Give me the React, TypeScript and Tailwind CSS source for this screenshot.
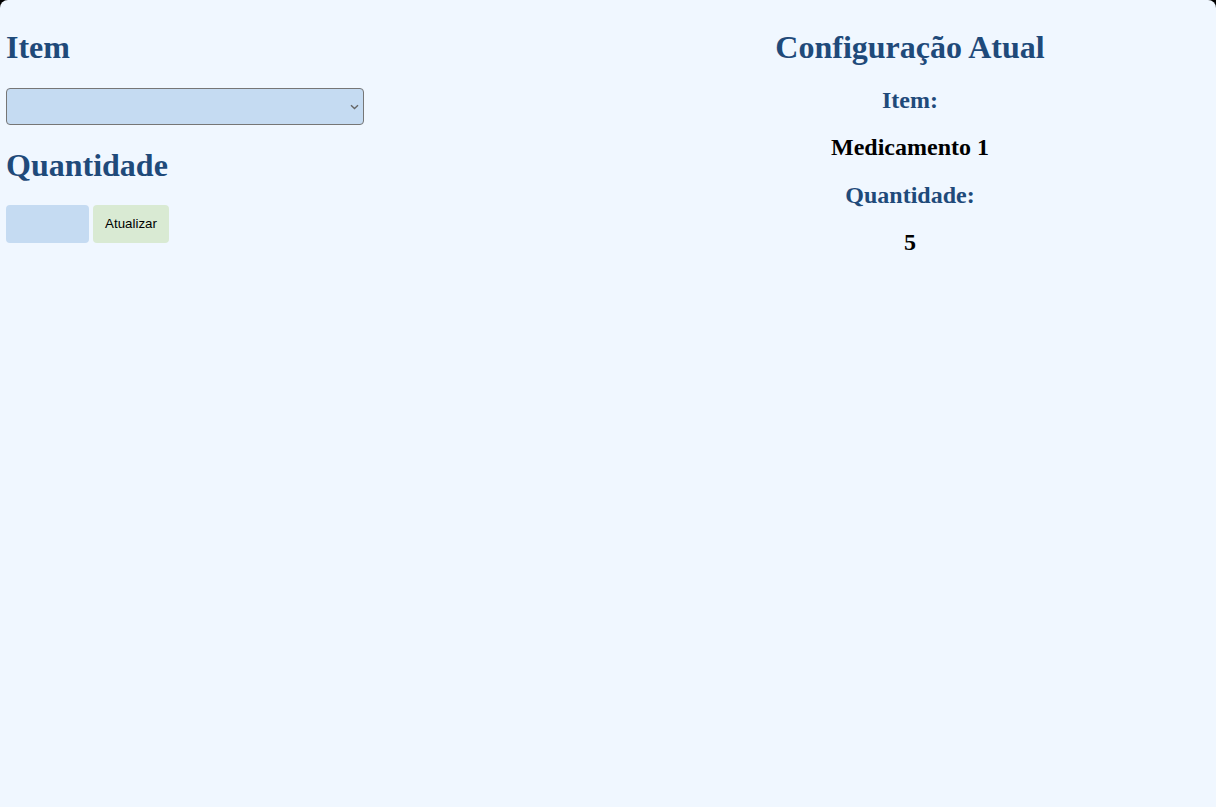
import React from "react";

export default function App() {
  const serif = { fontFamily: '"Liberation Serif", "Times New Roman", serif' };
  return (
    <div className="bg-black w-[1216px] h-[807px]">
      <div
        className="bg-[#f0f7ff] rounded-t-[8px] w-full h-full px-[6px] pt-[6px] grid grid-cols-2 items-start"
        style={serif}
      >
        <div className="flex flex-col items-start">
          <h1 className="text-[32px] leading-[36.8px] font-bold text-[#1f4a7a] mt-[23.44px] mb-[19.44px]">Item</h1>
          <div className="relative mt-[2px]">
            <select
              className="appearance-none block w-[358px] h-[37px] bg-[#c5dbf2] border border-[#767676] rounded-[4px] text-[13.33px] text-black px-[2px]"
              style={{ fontFamily: '"Liberation Sans", Arial, sans-serif' }}
              defaultValue=""
            >
              <option value=""></option>
              <option value="1">Medicamento 1</option>
            </select>
            <svg
              className="absolute right-[5px] top-[16px] pointer-events-none"
              width="9"
              height="6"
              viewBox="0 0 9 6"
              fill="none"
            >
              <path d="M1 1.2 L4.5 4.5 L8 1.2" stroke="#666666" strokeWidth="1.4" />
            </svg>
          </div>
          <h1 className="text-[32px] leading-[36.8px] font-bold text-[#1f4a7a] mt-[22px] mb-[19.5px]">Quantidade</h1>
          <div className="flex gap-[4px] mt-[2px]">
            <input
              type="number"
              className="w-[83px] h-[38px] bg-[#c5dbf2] rounded-[4px] border-0 outline-none px-[6px]"
            />
            <button
              className="w-[76px] h-[38px] bg-[#d9ead3] rounded-[4px] text-[13.33px] text-black"
              style={{ fontFamily: '"Liberation Sans", Arial, sans-serif' }}
            >
              Atualizar
            </button>
          </div>
        </div>
        <div className="flex flex-col items-center text-center pl-[2px]">
          <h1 className="text-[32px] leading-[36.8px] font-bold text-[#1f4a7a] mt-[23.44px]">Configuração Atual</h1>
          <h2 className="text-[24px] leading-[27.6px] font-bold text-[#1f4a7a] mt-[20.6px]">Item:</h2>
          <h2 className="text-[24px] leading-[27.6px] font-bold text-black mt-[19.8px]">Medicamento 1</h2>
          <h2 className="text-[24px] leading-[27.6px] font-bold text-[#1f4a7a] mt-[19.8px]">Quantidade:</h2>
          <h2 className="text-[24px] leading-[27.6px] font-bold text-black mt-[19.8px]">5</h2>
        </div>
      </div>
    </div>
  );
}
